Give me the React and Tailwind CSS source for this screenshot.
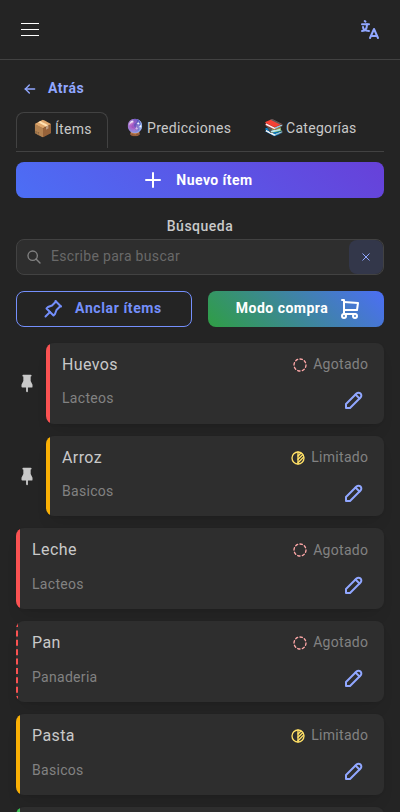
import { TbArrowLeft, TbCircleDashed, TbCircleHalf2, TbPencil, TbPin, TbPinnedFilled, TbPlus, TbSearch, TbShoppingCart } from 'react-icons/tb'

const items = [
  { id: 1, name: 'Huevos', category: 'Lacteos', status: 'out', pinned: true },
  { id: 2, name: 'Arroz', category: 'Basicos', status: 'low', pinned: true },
  { id: 3, name: 'Leche', category: 'Lacteos', status: 'out' },
  { id: 4, name: 'Pan', category: 'Panaderia', status: 'out', dashed: true },
  { id: 5, name: 'Pasta', category: 'Basicos', status: 'low' },
  { id: 6, status: 'ok' }
]

const barColors = {
  out: 'border-[#fa5252]',
  low: 'border-[#fab005]',
  ok: 'border-[#40c057]'
}

const LanguageIcon = () => (
  <svg className="h-6 w-6" viewBox="0 0 24 24" fill="none" stroke="currentColor" strokeWidth="2" strokeLinecap="round" strokeLinejoin="round">
    <path d="M9 6.371c0 4.418 -2.239 6.629 -5 6.629" />
    <path d="M4 6.371h7" />
    <path d="M5 9c0 2.144 2.252 3.908 6 4" />
    <path d="M12 20l4 -9l4 9" />
    <path d="M19.1 18h-6.2" />
    <path d="M6.694 3l.793 .582" />
  </svg>
)

const Status = ({ status }) => (
  <div className="flex items-center gap-[5px] text-sm text-[#828282]">
    {status === 'out' && <TbCircleDashed size={16} className="text-[#ffa8a8]" />}
    {status === 'low' && <TbCircleHalf2 size={16} className="text-[#ffe066]" />}
    <span className="-mt-[1.6px] -mr-[0.3px] tracking-[0.3px]">
      {status === 'out' ? 'Agotado' : 'Limitado'}
    </span>
  </div>
)

const ItemCard = ({ item }) => (
  <div className="flex items-center">
    {item.pinned && <TbPinnedFilled size={22} className="mr-2 shrink-0 text-[#c9c9c9]" />}
    <div className="flex h-[80.8px] flex-1 overflow-hidden rounded-lg bg-[#2e2e2e] shadow-[0_1px_3px_rgba(0,0,0,0.05),0_10px_15px_-5px_rgba(0,0,0,0.1)]">
      <div className={`w-4 shrink-0 ${barColors[item.status]} ${item.dashed ? 'border-l-2 border-dashed' : 'border-l-4'}`} />
      {item.name && (
        <div className="flex-1 pt-2 pr-4">
          <div className="flex h-7 items-center justify-between">
            <span className="tracking-[0.4px]">{item.name}</span>
            <Status status={item.status} />
          </div>
          <div className="mt-[7px] flex items-start justify-between">
            <span className="pt-[2.6px] text-sm tracking-[0.3px] text-[#828282]">{item.category}</span>
            <button className="flex h-7 w-7 items-center justify-center text-[#91a7ff]">
              <TbPencil size={24} />
            </button>
          </div>
        </div>
      )}
    </div>
  </div>
)

const App = () => {
  return (
    <div className="h-[812px] w-[400px] overflow-hidden bg-[#242424] font-['Roboto',sans-serif] text-base text-[#c9c9c9]">
      {/* Header */}
      <header className="flex h-[60px] items-center justify-between border-b border-[#424242] px-5">
        <button className="flex w-5 flex-col gap-[5px] px-px">
          <span className="h-px bg-white" />
          <span className="h-px bg-white" />
          <span className="h-px bg-white" />
        </button>
        <button className="-mr-0.5 text-[#91a7ff]">
          <LanguageIcon />
        </button>
      </header>

      <main className="px-4">
        <a className="flex h-[52px] items-center gap-[10px] pt-1.5 pl-1.5 text-sm font-bold text-[#91a7ff]">
          <TbArrowLeft size={16} />
          <span className="-mt-0.5 tracking-[0.5px]">Atrás</span>
        </a>

        {/* Tabs */}
        <nav className="flex h-10 items-start border-b border-[#424242] text-sm tracking-[0.3px]">
          <button className="flex h-9 w-[92px] items-center rounded-t-lg border border-b-0 border-[#424242] pl-[14px]">
            <span className="-mt-1 w-6 text-[16px] leading-none tracking-normal">📦</span>
            <span className="-mt-1">Ítems</span>
          </button>
          <button className="flex h-9 w-[139px] items-center pl-[14px]">
            <span className="-mt-1 w-[25px] text-[16px] leading-none tracking-normal">🔮</span>
            <span className="-mt-1">Predicciones</span>
          </button>
          <button className="flex h-9 items-center pl-[14px]">
            <span className="-mt-1 w-[25px] text-[16px] leading-none tracking-normal">📚</span>
            <span className="-mt-1">Categorías</span>
          </button>
        </nav>

        <button className="mt-[10px] flex h-9 w-full items-center justify-center gap-[11px] rounded-lg bg-[linear-gradient(45deg,#4c6ef5,#6741d9)] pr-[6px] text-sm font-bold text-white">
          <TbPlus size={24} />
          <span className="-mt-px tracking-[0.45px]">Nuevo ítem</span>
        </button>

        {/* Search */}
        <label className="mt-[17px] block h-6 text-center text-sm leading-[23px] font-medium tracking-[0.5px]">Búsqueda</label>
        <div className="flex h-9 items-center rounded-lg border border-[#424242] bg-[#2e2e2e] text-sm text-[#696969]">
          <TbSearch size={16} className="mr-px ml-[9px] text-[#828282]" />
          <span className="-mt-0.5 ml-2 flex-1 tracking-[0.32px]">Escribe para buscar</span>
          <button className="flex h-[34px] w-[34px] shrink-0 items-center justify-center rounded-lg bg-[#33374a] text-[#91a7ff]">
            <svg className="h-2 w-2" viewBox="0 0 8 8" stroke="currentColor" strokeWidth="1">
              <path d="M0.5 0.5l7 7M7.5 0.5l-7 7" />
            </svg>
          </button>
        </div>

        <div className="mt-4 grid grid-cols-2 gap-4 text-sm font-bold">
          <button className="flex h-9 items-center justify-center gap-[10px] rounded-lg border border-[#748ffc] pr-[5px] text-[#748ffc]">
            <TbPin size={24} />
            <span className="-mt-0.5 tracking-[0.6px]">Anclar ítems</span>
          </button>
          <button className="flex h-9 items-center justify-center gap-[10px] rounded-lg bg-[linear-gradient(45deg,#2f9e44,#4c6ef5)] pl-[6px] text-white">
            <span className="-mt-0.5 tracking-[0.5px]">Modo compra</span>
            <TbShoppingCart size={24} />
          </button>
        </div>

        {/* Items */}
        <div className="mt-[15.8px] flex flex-col gap-3">
          {items.map(item => (
            <ItemCard key={item.id} item={item} />
          ))}
        </div>
      </main>
    </div>
  )
}

export default App
